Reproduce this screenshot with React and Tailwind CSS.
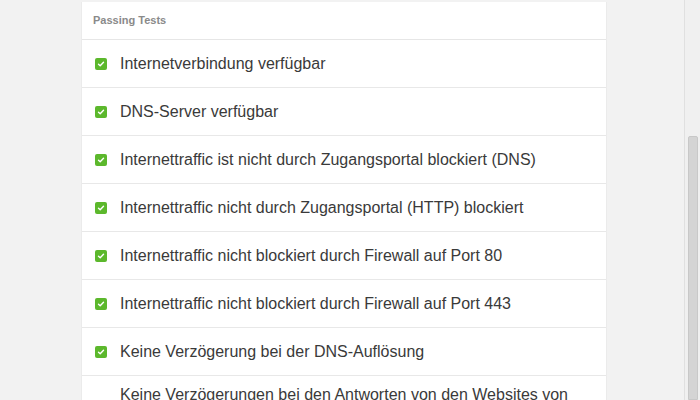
import React from 'react';

const tests = [
  'Internetverbindung verfügbar',
  'DNS-Server verfügbar',
  'Internettraffic ist nicht durch Zugangsportal blockiert (DNS)',
  'Internettraffic nicht durch Zugangsportal (HTTP) blockiert',
  'Internettraffic nicht blockiert durch Firewall auf Port 80',
  'Internettraffic nicht blockiert durch Firewall auf Port 443',
  'Keine Verzögerung bei der DNS-Auflösung',
];

function Check() {
  return (
    <span className="w-[12px] h-[12px] rounded-[2px] bg-[#5cb82c] flex items-center justify-center shrink-0">
      <svg width="8" height="8" viewBox="0 0 8 8" fill="none">
        <path d="M1.5 4.2 L3.2 5.8 L6.5 2.3" stroke="white" strokeWidth="1.4" strokeLinecap="round" strokeLinejoin="round" />
      </svg>
    </span>
  );
}

export default function App() {
  return (
    <div className="w-[700px] h-[400px] overflow-hidden bg-[#f2f2f2] flex font-['Liberation_Sans',Arial,sans-serif]">
      <div className="w-[81px] shrink-0" />
      <div className="w-[526px] shrink-0 pt-[2px]">
        <div className="bg-white border-x border-[#ebebeb]">
          <div className="h-[38px] flex items-center px-[11px] border-b border-[#e6e6e6] text-[11px] font-bold text-[#8a8a8a]">
            Passing Tests
          </div>
          {tests.map((t) => (
            <div key={t} className="h-[48px] flex items-center gap-[13px] pl-[13px] border-b border-[#e8e8e8] text-[16px] text-[#3a3a3a]">
              <Check />
              <span>{t}</span>
            </div>
          ))}
          <div className="flex items-start pl-[38px] pt-[8px] text-[16px] text-[#3a3a3a] leading-[22px]">
            <span>Keine Verzögerungen bei den Antworten von den Websites von</span>
          </div>
        </div>
      </div>
      <div className="flex-1" />
      <div className="w-[16px] shrink-0 border-l border-[#e0e0e0] bg-[#f0f0f0] flex flex-col pl-[3px] pr-[2px]">
        <div className="h-[136px]" />
        <div className="flex-1 bg-[#d4d4d4] border border-[#c8c8c8] rounded-t-[2px]" />
      </div>
    </div>
  );
}
